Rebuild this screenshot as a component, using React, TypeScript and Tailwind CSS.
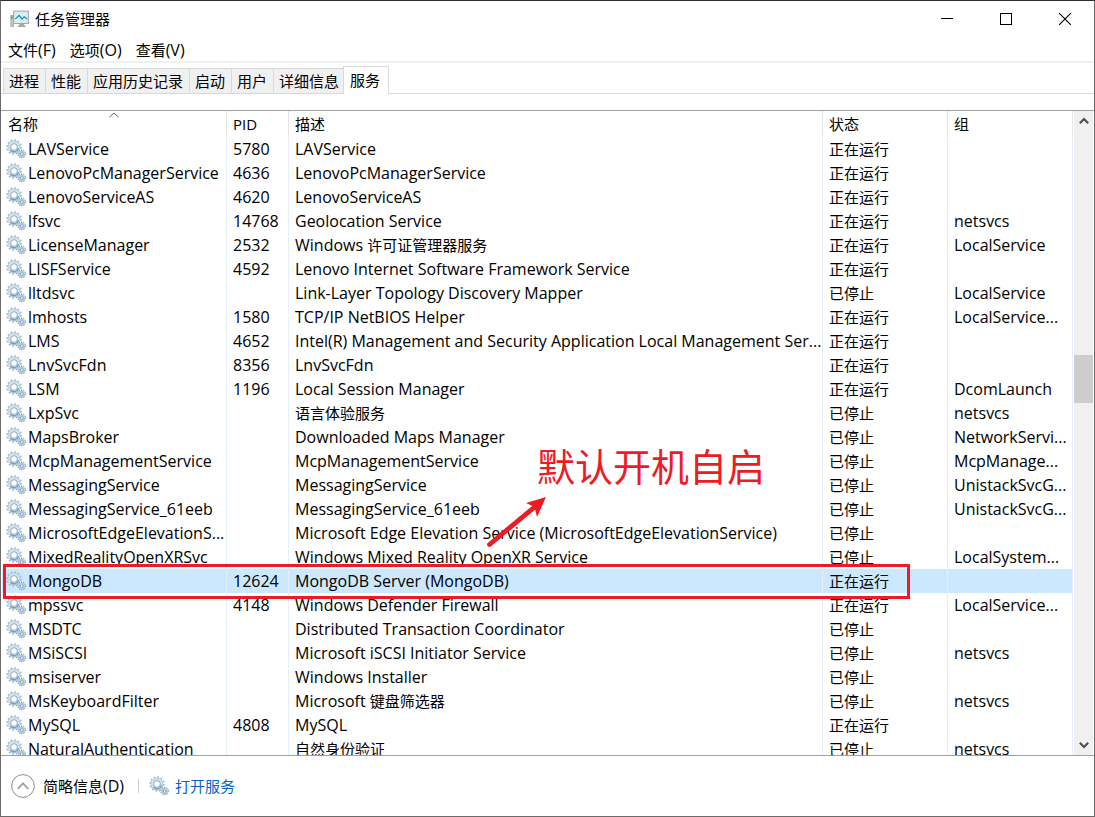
import React from "react";

type Service = [name: string, pid: string, description: string, running: boolean, group: string];

const services: Service[] = [
  ["LAVService", "5780", "LAVService", true, ""],
  ["LenovoPcManagerService", "4636", "LenovoPcManagerService", true, ""],
  ["LenovoServiceAS", "4620", "LenovoServiceAS", true, ""],
  ["lfsvc", "14768", "Geolocation Service", true, "netsvcs"],
  ["LicenseManager", "2532", "Windows 许可证管理器服务", true, "LocalService"],
  ["LISFService", "4592", "Lenovo Internet Software Framework Service", true, ""],
  ["lltdsvc", "", "Link-Layer Topology Discovery Mapper", false, "LocalService"],
  ["lmhosts", "1580", "TCP/IP NetBIOS Helper", true, "LocalService..."],
  ["LMS", "4652", "Intel(R) Management and Security Application Local Management Ser...", true, ""],
  ["LnvSvcFdn", "8356", "LnvSvcFdn", true, ""],
  ["LSM", "1196", "Local Session Manager", true, "DcomLaunch"],
  ["LxpSvc", "", "语言体验服务", false, "netsvcs"],
  ["MapsBroker", "", "Downloaded Maps Manager", false, "NetworkServi..."],
  ["McpManagementService", "", "McpManagementService", false, "McpManage..."],
  ["MessagingService", "", "MessagingService", false, "UnistackSvcG..."],
  ["MessagingService_61eeb", "", "MessagingService_61eeb", false, "UnistackSvcG..."],
  ["MicrosoftEdgeElevationS...", "", "Microsoft Edge Elevation Service (MicrosoftEdgeElevationService)", false, ""],
  ["MixedRealityOpenXRSvc", "", "Windows Mixed Reality OpenXR Service", false, "LocalSystem..."],
  ["MongoDB", "12624", "MongoDB Server (MongoDB)", true, ""],
  ["mpssvc", "4148", "Windows Defender Firewall", true, "LocalService..."],
  ["MSDTC", "", "Distributed Transaction Coordinator", false, ""],
  ["MSiSCSI", "", "Microsoft iSCSI Initiator Service", false, "netsvcs"],
  ["msiserver", "", "Windows Installer", false, ""],
  ["MsKeyboardFilter", "", "Microsoft 键盘筛选器", false, "netsvcs"],
  ["MySQL", "4808", "MySQL", true, ""],
  ["NaturalAuthentication", "", "自然身份验证", false, "netsvcs"],
];

const tabs = ["进程", "性能", "应用历史记录", "启动", "用户", "详细信息", "服务"];

/** Sets Latin runs one size up from the Chinese text around them. */
function Mixed({ text }: { text: string }) {
  return (
    <>
      {text.split(/([\u4e00-\u9fff]+)/).filter(Boolean).map((run, i) =>
        /[\u4e00-\u9fff]/.test(run) ? run : <span key={i} className="text-[16px]">{run}</span>,
      )}
    </>
  );
}

function GearsIcon() {
  return (
    <svg width="20" height="20" viewBox="0 0 20 20" className="shrink-0" aria-hidden="true">
      <circle cx="8" cy="8" r="6.9" fill="none" stroke="#9fb6c7" strokeWidth="1.7" strokeDasharray="1.7 1.91" />
      <circle cx="8" cy="8" r="4.8" fill="none" stroke="#cfe8fa" strokeWidth="2.8" />
      <circle cx="8" cy="8" r="6" fill="none" stroke="#a3c0d5" strokeWidth="0.7" />
      <path d="M4.4 11.2a4.8 4.8 0 0 0 8.3-2" fill="none" stroke="#6b9abd" strokeWidth="1.2" />
      <circle cx="8" cy="8" r="3.4" fill="#fff" stroke="#7d98ad" strokeWidth="0.9" />
      <circle cx="15.6" cy="15" r="3.6" fill="#fff" stroke="#7f94a4" strokeWidth="1.2" strokeDasharray="1.4 0.86" />
      <circle cx="15.6" cy="15" r="2.4" fill="#fff" stroke="#a9cde4" strokeWidth="1.5" />
      <circle cx="15.6" cy="15" r="1.4" fill="#fff" stroke="#6f8ba0" strokeWidth="0.8" />
    </svg>
  );
}

function MonitorIcon() {
  return (
    <svg width="20" height="18" viewBox="0 0 20 18" aria-hidden="true">
      <rect x="1.9" y="5.5" width="2.4" height="11" fill="#c9c9c9" stroke="#9a9a9a" strokeWidth="0.8" />
      <rect x="2" y="6.5" width="2" height="2" fill="#39b54a" />
      <path d="M11 13.5h3l3 3.5H8.5z" fill="#a8a8a8" />
      <rect x="4.6" y="1.1" width="14.8" height="12.4" fill="#e2e2e2" stroke="#a8a8a8" />
      <rect x="6" y="2.5" width="12" height="9.5" fill="#d6f1fc" />
      <path d="M6 8.8l1.5-.8 2.5-2.6 3 3.6 2.3-2.3L18 9" fill="none" stroke="#2189bd" strokeWidth="1.2" />
    </svg>
  );
}

function Chevron({ up }: { up: boolean }) {
  return (
    <svg width="10" height="8" viewBox="0 0 10 8" aria-hidden="true">
      <path d={up ? "M0.8 6.2L5 2l4.2 4.2" : "M0.8 1.8L5 6l4.2-4.2"} fill="none" stroke="#505050" strokeWidth="2.2" />
    </svg>
  );
}

const captionButton = "flex h-full w-[59px] items-center justify-center";
const headCell = "relative border-r border-[#e5e5e5] px-1.5 text-left font-normal";
const bodyCell = "overflow-hidden border-r border-[#e5f0fb] pl-1.5";

export default function App() {
  return (
    <div className="flex h-screen flex-col overflow-hidden border border-[#6b6b6b] border-t-[#302d30] bg-white font-['Open_Sans','Noto_Sans_CJK_SC',sans-serif] text-[15px] leading-6 text-black">
      <header className="flex h-9 shrink-0 items-center">
        <div className="flex flex-1 items-center gap-1.5 pl-2">
          <MonitorIcon />
          <h1>任务管理器</h1>
        </div>
        <button aria-label="最小化" className={captionButton}>
          <svg width="12" height="12" viewBox="0 0 12 12"><path d="M0 5.5h12" stroke="#000" /></svg>
        </button>
        <button aria-label="最大化" className={captionButton}>
          <svg width="12" height="12" viewBox="0 0 12 12" shapeRendering="crispEdges"><rect x="0.5" y="0.5" width="11" height="11" fill="none" stroke="#000" /></svg>
        </button>
        <button aria-label="关闭" className={captionButton}>
          <svg width="12" height="12" viewBox="0 0 12 12"><path d="M0 0l12 12M12 0L0 12" stroke="#000" strokeWidth="1.1" /></svg>
        </button>
      </header>

      <nav className="flex h-[26px] shrink-0 items-center gap-3.5 border-b-2 border-[#f0f0f0] pt-0.5 pl-[7px]">
        <button><Mixed text="文件(F)" /></button>
        <button><Mixed text="选项(O)" /></button>
        <button><Mixed text="查看(V)" /></button>
      </nav>

      <div role="tablist" className="flex h-[31px] shrink-0 items-end border-b border-[#d9d9d9] pl-0.5">
        {tabs.map((tab) =>
          tab === "服务" ? (
            <button key={tab} role="tab" aria-selected="true" className="-mb-px -ml-0.5 h-7 border border-b-0 border-[#d9d9d9] bg-white pr-2 pb-0.5 pl-1.5">
              {tab}
            </button>
          ) : (
            <button key={tab} role="tab" aria-selected="false" className="h-[25px] border-t border-l border-[#d9d9d9] bg-[#f0f0f0] pr-1.5 pl-[5px]">
              {tab}
            </button>
          ),
        )}
      </div>

      <main className="relative mt-4 flex min-h-0 flex-1 overflow-hidden border-y border-[#a0a0a0] pl-px">
        <div className="min-w-0 flex-1 overflow-hidden">
          <table className="w-full table-fixed border-separate border-spacing-0 whitespace-nowrap">
            <colgroup>
              <col className="w-[225px]" />
              <col className="w-[62px]" />
              <col />
              <col className="w-[125px]" />
              <col className="w-[125px]" />
            </colgroup>
            <thead>
              <tr className="h-[26px]">
                <th className={headCell}>
                  名称
                  <svg className="absolute top-px left-1/2 -translate-x-1/2" width="10" height="6" viewBox="0 0 10 6" aria-hidden="true">
                    <path d="M0.5 5.2L5 1l4.5 4.2" fill="none" stroke="#606060" />
                  </svg>
                </th>
                <th className={headCell}>PID</th>
                <th className={headCell}>描述</th>
                <th className={headCell}>状态</th>
                <th className={headCell}>组</th>
              </tr>
            </thead>
            <tbody>
              {services.map(([name, pid, description, running, group]) => (
                <tr key={name} className={name === "MongoDB" ? "h-6 bg-[#cce8ff]" : "h-6"}>
                  <td className="overflow-hidden border-r border-[#e5f0fb] pl-1">
                    <div className="flex h-6 items-center gap-0.5">
                      <GearsIcon />
                      <Mixed text={name} />
                    </div>
                  </td>
                  <td className={bodyCell}><Mixed text={pid} /></td>
                  <td className={bodyCell}><Mixed text={description} /></td>
                  <td className={bodyCell}>{running ? "正在运行" : "已停止"}</td>
                  <td className={bodyCell}><Mixed text={group} /></td>
                </tr>
              ))}
            </tbody>
          </table>
        </div>
        <div className="mr-px ml-px flex w-[19px] shrink-0 flex-col items-center bg-[#f0f0f0]">
          <button aria-label="向上滚动" className="flex h-5 w-full items-center justify-center"><Chevron up /></button>
          <div className="flex w-full flex-1 flex-col">
            <div className="flex-[224]" />
            <div className="h-12 w-full bg-[#cdcdcd]" />
            <div className="flex-[332]" />
          </div>
          <button aria-label="向下滚动" className="flex h-5 w-full items-center justify-center"><Chevron up={false} /></button>
        </div>

        <div className="pointer-events-none absolute top-[453px] right-[184px] left-[2px] h-[35px] border-3 border-[#ed1c24]" />
        <p className="pointer-events-none absolute top-[331px] left-[536px] text-[38px] leading-[48px] whitespace-nowrap text-[#ed1c24]">默认开机自启</p>
        <svg className="pointer-events-none absolute top-[384px] left-[484px]" width="64" height="54" viewBox="0 0 64 54" aria-hidden="true">
          <path d="M4.5 49.5L52 10" stroke="#ed1c24" strokeWidth="4.8" strokeLinecap="round" />
          <path d="M61 2L41 8l8.5 4L52 22z" fill="#ed1c24" />
        </svg>
      </main>

      <footer className="flex h-[60px] shrink-0 items-center pl-2.5">
        <button className="flex items-center gap-2">
          <svg width="24" height="24" viewBox="0 0 24 24" aria-hidden="true">
            <circle cx="12" cy="12" r="11.4" fill="none" stroke="#8c8c8c" />
            <path d="M6.8 14.8L12 9.4l5.2 5.4" fill="none" stroke="#a0a0a0" strokeWidth="1.8" />
          </svg>
          <span><Mixed text="简略信息(D)" /></span>
        </button>
        <span className="mr-2.5 ml-3.5 h-3.5 w-px bg-[#cfcfcf]" />
        <a href="#services" className="flex items-center gap-1.5 text-[#0066cc]">
          <GearsIcon />
          打开服务
        </a>
      </footer>
    </div>
  );
}
